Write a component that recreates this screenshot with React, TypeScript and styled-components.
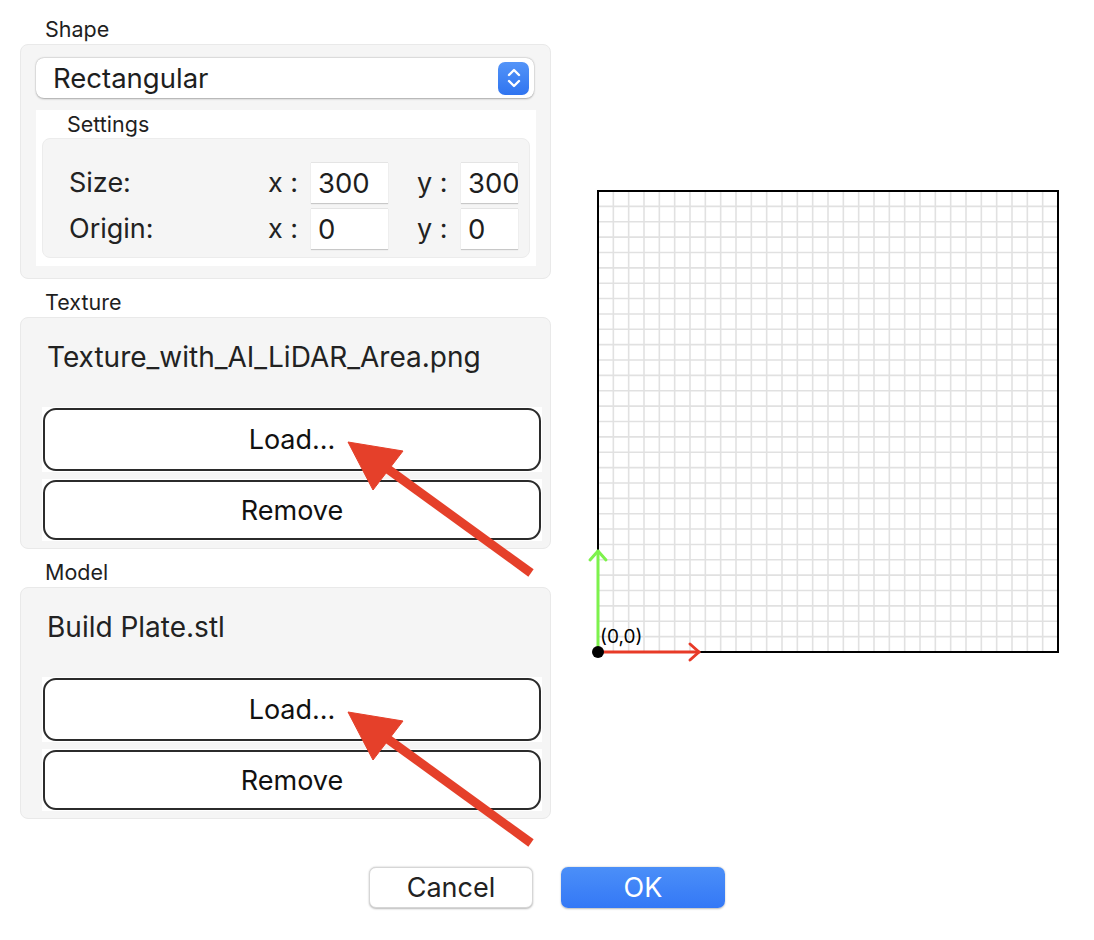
import React from 'react';
import styled, { createGlobalStyle } from 'styled-components';

const GlobalStyle = createGlobalStyle`
  body {
    margin: 0;
    background: #ffffff;
    font-family: Inter, "Noto Sans", "Liberation Sans", sans-serif;
    color: #222222;
  }
`;

const Page = styled.div`
  position: relative;
  width: 1094px;
  height: 940px;
  display: flex;
  flex-direction: column;
`;

const Workspace = styled.div`
  display: flex;
  padding: 15px 0 0 20px;
`;

const LeftColumn = styled.div`
  width: 531px;
  display: flex;
  flex-direction: column;
`;

const GroupTitle = styled.div<{ $top?: number }>`
  font-size: 21.5px;
  line-height: 29px;
  padding-left: 25px;
  margin-top: ${(p) => p.$top ?? 0}px;
  color: #1f1f1f;
`;

const GroupBox = styled.div`
  background: #f5f5f5;
  border: 1px solid #e9e9e9;
  border-radius: 8px;
  display: flex;
  flex-direction: column;
`;

const ShapeBox = styled(GroupBox)`
  padding: 13px 0 12px 15px;
`;

const FileBox = styled(GroupBox)`
  padding: 19px 8px 7px 21px;
`;

const Popup = styled.div`
  width: 498px;
  height: 40px;
  box-sizing: border-box;
  background: #ffffff;
  border-radius: 8px;
  box-shadow: 0 0.5px 2px rgba(0, 0, 0, 0.3), 0 0 0 0.5px rgba(0, 0, 0, 0.06);
  display: flex;
  align-items: center;
  justify-content: space-between;
  padding: 0 5px 0 17px;
  font-size: 27.5px;
  color: #1e1e1e;
`;

const Stepper = styled.div`
  width: 31px;
  height: 33px;
  border-radius: 7px;
  background: linear-gradient(#5394f8, #2f74f0);
  display: flex;
  align-items: center;
  justify-content: center;
`;

const SettingsArea = styled.div`
  width: 500px;
  margin-top: 12px;
  background: #ffffff;
  box-sizing: border-box;
  padding: 0 6px 8px 6px;
`;

const SettingsTitle = styled.div`
  font-size: 21.5px;
  line-height: 28px;
  padding-left: 25px;
  color: #1f1f1f;
`;

const SettingsBox = styled.div`
  background: #f5f5f5;
  border: 1px solid #ececec;
  border-radius: 8px;
  padding: 23px 0 8px 26px;
  display: grid;
  grid-template-columns: 199px 43px 77px 73px 57px;
  grid-auto-rows: 41px;
  row-gap: 5px;
  align-items: center;
`;

const FieldLabel = styled.div`
  font-size: 27px;
  color: #222222;
`;

const AxisLabel = styled.div<{ $indent?: number }>`
  font-size: 27px;
  color: #222222;
  padding-left: ${(p) => p.$indent ?? 0}px;
`;

const NumberBox = styled.div`
  height: 41px;
  box-sizing: border-box;
  background: #ffffff;
  border-top: 1px solid #e4e4e4;
  box-shadow: 0 1px 1px rgba(0, 0, 0, 0.18);
  font-size: 27.5px;
  line-height: 40px;
  padding-left: 7px;
  overflow: hidden;
  white-space: nowrap;
  color: #1e1e1e;
`;

const FileName = styled.div`
  font-size: 28px;
  line-height: 40px;
  padding-left: 5px;
  color: #222222;
  margin-bottom: 30px;
`;

const ButtonWell = styled.div<{ $gap?: number }>`
  width: 500px;
  background: #ffffff;
  padding: 1px;
  box-sizing: border-box;
  margin-bottom: ${(p) => p.$gap ?? 0}px;
`;

const WideButton = styled.button<{ $h: number }>`
  width: 100%;
  height: ${(p) => p.$h}px;
  background: #ffffff;
  border: 2px solid #2b2b2b;
  border-radius: 13px;
  font-family: inherit;
  font-size: 27px;
  color: #111111;
  display: block;
`;

const Footer = styled.div`
  display: flex;
  justify-content: center;
  gap: 28px;
  margin-top: 48px;
`;

const DialogButton = styled.button<{ $primary?: boolean }>`
  width: 164px;
  height: 41px;
  border-radius: 7px;
  font-family: inherit;
  font-size: 27px;
  border: ${(p) => (p.$primary ? 'none' : '0.5px solid #d6d6d6')};
  background: ${(p) => (p.$primary ? 'linear-gradient(#4b8ff8, #3478f6)' : '#ffffff')};
  color: ${(p) => (p.$primary ? '#ffffff' : '#222222')};
  box-shadow: 0 0.5px 2px rgba(0, 0, 0, 0.28);
`;

const CanvasWrap = styled.div`
  margin: 176px 0 0 47px;
  width: 460px;
  height: 461px;
`;

const Overlay = styled.svg`
  position: absolute;
  left: 0;
  top: 0;
  pointer-events: none;
`;

const GRID = 30;

const PlateCanvas: React.FC = () => {
  const lines = [];
  for (let i = 1; i < GRID; i++) {
    const x = (i * 460) / GRID;
    const y = (i * 461) / GRID;
    lines.push(<line key={'v' + i} x1={x} y1={0} x2={x} y2={461} />);
    lines.push(<line key={'h' + i} x1={0} y1={y} x2={460} y2={y} />);
  }
  return (
    <svg width={460} height={461} style={{ overflow: 'visible', display: 'block' }}>
      <g stroke="#e1e1e1" strokeWidth={1.6}>{lines}</g>
      <rect x={0} y={0} width={460} height={461} fill="none" stroke="#000" strokeWidth={2} />
      <g stroke="#7df24c" strokeWidth={3} fill="none" strokeLinecap="round" strokeLinejoin="round">
        <line x1={0} y1={461} x2={0} y2={360} />
        <polyline points="-8,369 0,360 8,369" />
      </g>
      <g stroke="#e83a27" strokeWidth={3} fill="none" strokeLinecap="round" strokeLinejoin="round">
        <line x1={0} y1={461} x2={101} y2={461} />
        <polyline points="92,453 101,461 92,469" />
      </g>
      <circle cx={0} cy={461} r={6} fill="#000" />
      <text x={2} y={452} fontSize={19} fontFamily="Inter, sans-serif" fill="#000">
        (0,0)
      </text>
    </svg>
  );
};

const Pointer: React.FC<{ dy: number }> = ({ dy }) => (
  <g transform={`translate(0 ${dy})`} fill="#e5402a" stroke="#e5402a">
    <line x1={531} y1={573} x2={385} y2={467} strokeWidth={9} />
    <polygon points="348,442 403,451 373,490" strokeWidth={1} />
  </g>
);

const FileGroup: React.FC<{ title: string; file: string }> = ({ title, file }) => (
  <>
    <GroupTitle $top={9}>{title}</GroupTitle>
    <FileBox>
      <FileName>{file}</FileName>
      <ButtonWell $gap={7}>
        <WideButton $h={63}>Load...</WideButton>
      </ButtonWell>
      <ButtonWell>
        <WideButton $h={60}>Remove</WideButton>
      </ButtonWell>
    </FileBox>
  </>
);

export default function App() {
  return (
    <Page>
      <GlobalStyle />
      <Workspace>
        <LeftColumn>
          <GroupTitle>Shape</GroupTitle>
          <ShapeBox>
            <Popup>
              <span>Rectangular</span>
              <Stepper>
                <svg width="14" height="22" viewBox="0 0 14 22" fill="none" stroke="#fff" strokeWidth="2.4" strokeLinecap="round" strokeLinejoin="round">
                  <polyline points="2,8 7,3 12,8" />
                  <polyline points="2,14 7,19 12,14" />
                </svg>
              </Stepper>
            </Popup>
            <SettingsArea>
              <SettingsTitle>Settings</SettingsTitle>
              <SettingsBox>
                <FieldLabel>Size:</FieldLabel>
                <AxisLabel>x :</AxisLabel>
                <NumberBox>300</NumberBox>
                <AxisLabel $indent={29}>y :</AxisLabel>
                <NumberBox>300</NumberBox>
                <FieldLabel>Origin:</FieldLabel>
                <AxisLabel>x :</AxisLabel>
                <NumberBox>0</NumberBox>
                <AxisLabel $indent={29}>y :</AxisLabel>
                <NumberBox>0</NumberBox>
              </SettingsBox>
            </SettingsArea>
          </ShapeBox>
          <FileGroup title="Texture" file="Texture_with_AI_LiDAR_Area.png" />
          <FileGroup title="Model" file="Build Plate.stl" />
        </LeftColumn>
        <CanvasWrap>
          <PlateCanvas />
        </CanvasWrap>
      </Workspace>
      <Footer>
        <DialogButton>Cancel</DialogButton>
        <DialogButton $primary>OK</DialogButton>
      </Footer>
      <Overlay width={1094} height={940}>
        <Pointer dy={0} />
        <Pointer dy={270} />
      </Overlay>
    </Page>
  );
}
